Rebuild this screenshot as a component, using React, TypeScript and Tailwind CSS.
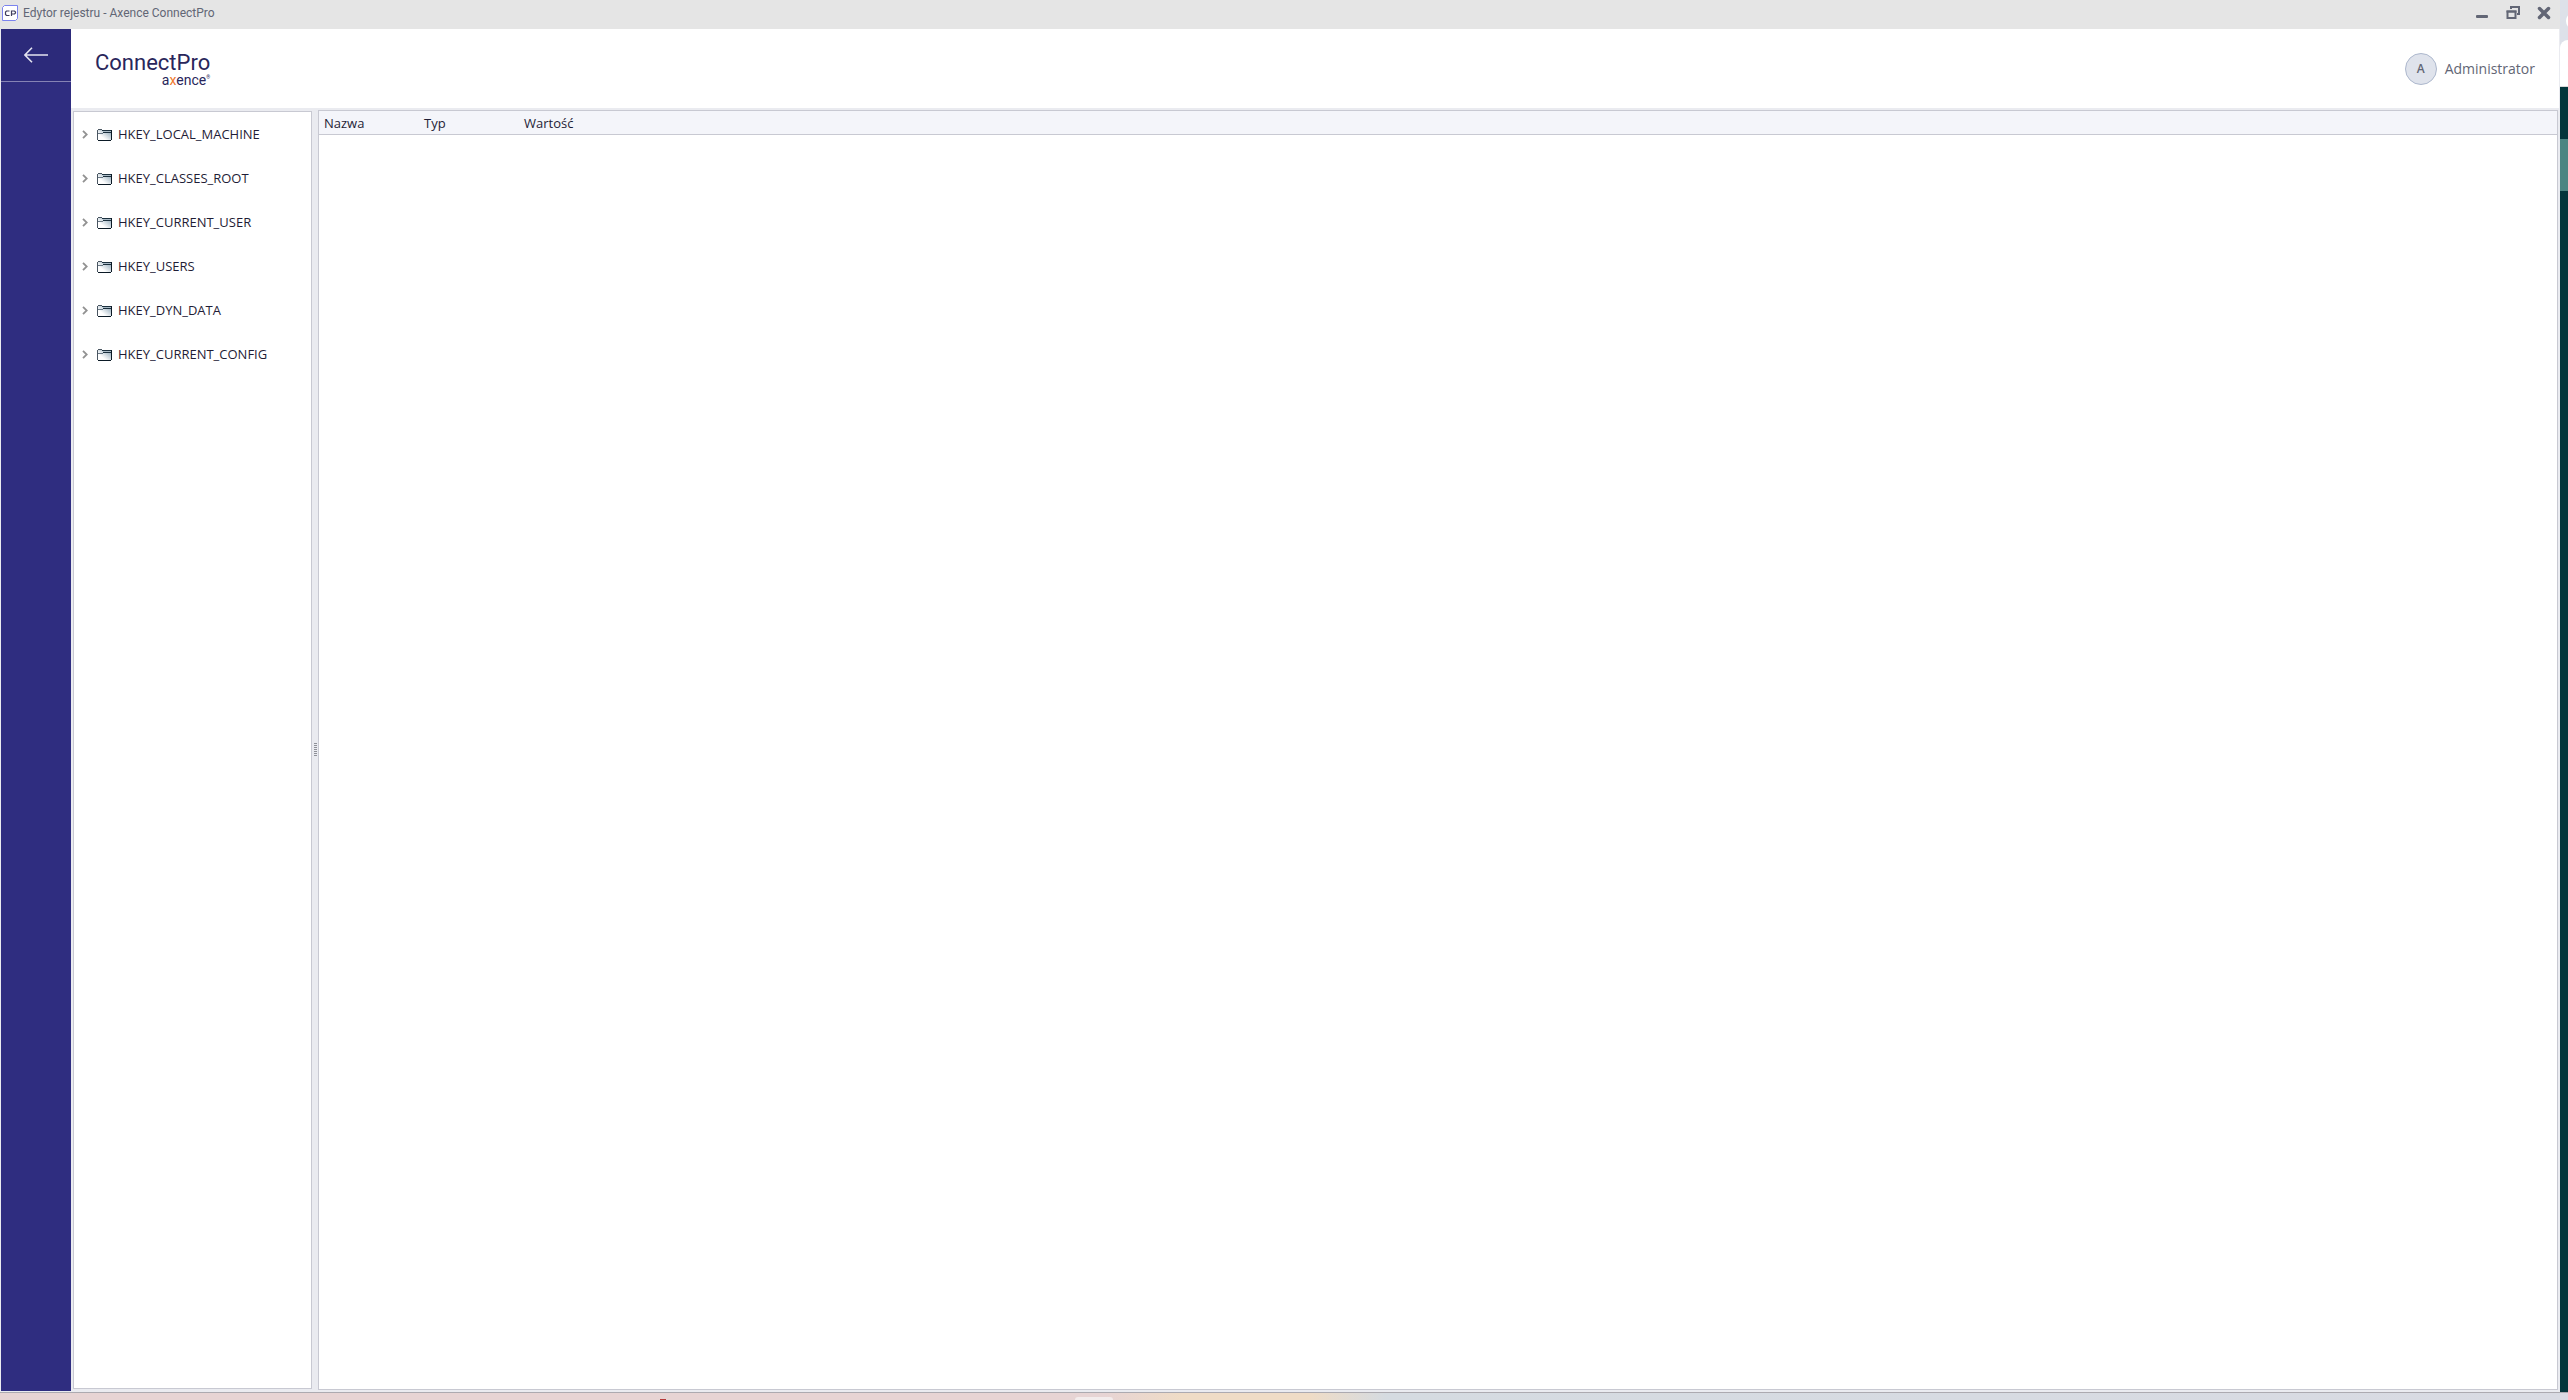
import React from "react";

const rootKeys = [
  "HKEY_LOCAL_MACHINE",
  "HKEY_CLASSES_ROOT",
  "HKEY_CURRENT_USER",
  "HKEY_USERS",
  "HKEY_DYN_DATA",
  "HKEY_CURRENT_CONFIG",
];

function FolderIcon() {
  return (
    <svg width="15" height="12" viewBox="0 0 15 12" shapeRendering="crispEdges" aria-hidden="true">
      <defs>
        <linearGradient id="folderFill" x1="0" y1="1" x2="1" y2="0">
          <stop offset="0.3" stopColor="#ffffff" />
          <stop offset="1" stopColor="#86a0b2" />
        </linearGradient>
      </defs>
      <rect x="1" y="1" width="13" height="10" fill="url(#folderFill)" />
      <path d="M1 0h4v1H1zM0 1h1v10H0z" fill="#4a5662" />
      <path d="M5 1h9v1H5zM6 3h8v1H6z" fill="#1b303e" />
      <path d="M6 2h8v1H6z" fill="#a9bac6" />
      <path d="M1 4h5v1H1z" fill="#6b7a88" />
      <path d="M14 1h1v10h-1zM1 11h13v1H1z" fill="#0b1a26" />
    </svg>
  );
}

function TitleBar() {
  return (
    <div className="flex h-[29px] shrink-0 items-center bg-[#e5e5e5] pb-[3px] pl-0.5 pr-[9px] text-[#626675]">
      <svg width="16" height="16" viewBox="0 0 16 16" aria-hidden="true">
        <path d="M2.500.5h13v13l-2 2h-13v-13z" fill="#fff" stroke="#7b83ee" />
        <path
          d="M7.500 6H4.500L3.500 7v2.500l1 1h3M9.500 11V6h3l1 1v1l-1 1h-3"
          fill="none"
          stroke="#3f3d5c"
          strokeWidth="1.200"
        />
      </svg>
      <h1 className="ml-[5px] font-[Roboto] text-[12px] leading-4">Edytor rejestru - Axence ConnectPro</h1>
      <div className="ml-auto flex items-center gap-[17px]">
        <button type="button" aria-label="Minimize">
          <svg width="14" height="14" viewBox="0 0 14 14">
            <rect x="1" y="9" width="12" height="3" rx="1" fill="#626675" />
          </svg>
        </button>
        <button type="button" aria-label="Restore">
          <svg width="14" height="14" viewBox="0 0 14 14" fill="none" stroke="#626675">
            <path d="M5 3V1h8v7h-2" strokeWidth="2" />
            <path d="M1.500 5.500h8V12h-8z" strokeWidth="2" />
            <path d="M.5 5.500h10" strokeWidth="2" />
          </svg>
        </button>
        <button type="button" aria-label="Close">
          <svg width="14" height="14" viewBox="0 0 14 14">
            <path d="M2.500 2.500l9 9M11.500 2.500l-9 9" stroke="#626675" strokeWidth="3.500" strokeLinecap="round" />
          </svg>
        </button>
      </div>
    </div>
  );
}

function Sidebar() {
  return (
    <nav className="w-[70px] shrink-0 bg-[#2f2d80]">
      <button
        type="button"
        aria-label="Back"
        className="flex h-[53px] w-full items-center justify-center border-b border-[#8583b5] bg-[#2c2a7a]"
      >
        <svg width="24" height="16" viewBox="0 0 24 16" fill="none" stroke="#e4e4f0" strokeWidth="1.600">
          <path d="M8 .8L.9 8 8 15.200M1 8h23" />
        </svg>
      </button>
    </nav>
  );
}

function Logo() {
  return (
    <div className="flex flex-col items-end pt-0.5 font-[Roboto] text-[#29265b]">
      <span className="text-[22px] leading-5">ConnectPro</span>
      <span className="flex text-[14px] leading-[14px]">
        a<span className="text-[#f0772b]">x</span>ence
        <span className="text-[5px] leading-2">®</span>
      </span>
    </div>
  );
}

function Header() {
  return (
    <header className="flex h-[79px] shrink-0 items-center justify-between bg-white px-6">
      <Logo />
      <div className="flex items-center gap-2 text-[14px] text-[#626675]">
        <span className="flex size-8 items-center justify-center rounded-full border border-[#adb8cd] bg-[#dfe3ec] text-[12px] font-semibold">
          A
        </span>
        Administrator
      </div>
    </header>
  );
}

function KeyTree() {
  return (
    <aside className="mb-0.5 mt-[3px] w-[239px] shrink-0 border border-[#c8c9d2] bg-white">
      <ul>
        {rootKeys.map((key) => (
          <li key={key}>
            <button type="button" className="flex h-11 w-full items-center pl-2 pt-px text-[13px] text-[#1f1d36]">
              <svg width="6" height="9" viewBox="0 0 6 9" fill="none" stroke="#929292" strokeWidth="1.800" aria-hidden="true">
                <path d="M1 .8L4.700 4.500 1 8.200" />
              </svg>
              <span className="ml-[9px] mr-1.5 shrink-0">
                <FolderIcon />
              </span>
              {key}
            </button>
          </li>
        ))}
      </ul>
    </aside>
  );
}

function Splitter() {
  return (
    <div role="separator" aria-orientation="vertical" className="flex w-1.5 shrink-0 flex-col items-center justify-center gap-px">
      {Array.from({ length: 7 }, (_, i) => (
        <span key={i} className="h-px w-[3px] bg-[#8e9097]" />
      ))}
    </div>
  );
}

function ValuesPane() {
  return (
    <section className="mb-px mt-0.5 flex-1 border border-[#c8c9d2] bg-white">
      <table className="w-full table-fixed border-separate border-spacing-0 text-left text-[13px] leading-[18px] text-[#1f1d36]">
        <thead>
          <tr className="h-6 bg-[#f4f5fa]">
            <th className="w-[100px] border-b border-[#c8c9d2] px-[5px] py-0 font-normal">Nazwa</th>
            <th className="w-[100px] border-b border-[#c8c9d2] px-[5px] py-0 font-normal">Typ</th>
            <th className="border-b border-[#c8c9d2] px-[5px] py-0 font-normal">Wartość</th>
          </tr>
        </thead>
        <tbody />
      </table>
    </section>
  );
}

export default function App() {
  return (
    <div className="flex h-screen flex-col overflow-hidden font-['Open_Sans',sans-serif]">
      <div className="flex min-h-0 flex-1">
        <div className="flex min-w-0 flex-1 flex-col bg-[#eaebf0]">
          <TitleBar />
          <div className="mb-px flex min-h-0 flex-1 pl-px">
            <Sidebar />
            <div className="flex min-w-0 flex-1 flex-col pr-px">
              <Header />
              <main className="flex min-h-0 flex-1 pl-0.5 pr-px">
                <KeyTree />
                <Splitter />
                <ValuesPane />
              </main>
            </div>
          </div>
        </div>
        <div className="flex w-2 shrink-0 flex-col bg-[#dde1e9]">
          <div className="flex h-10 items-center justify-end overflow-hidden">
            <span className="-mr-4 mt-[2px] size-[18px] shrink-0 rounded-full bg-white" />
          </div>
          <div className="h-[47px] rounded-tl-lg border-b border-[#d8d8d8] bg-white" />
          <div className="h-[52px] bg-[#03363b]" />
          <div className="h-[52px] bg-[#4b8582]" />
          <div className="flex-1 bg-[#03363b]" />
        </div>
      </div>
      <div className="relative h-2 shrink-0 border-t border-[#acaab0] bg-[linear-gradient(to_right,#e7d4d4_43%,#efdcc6_46%,#efdcc6_51%,#d5dbe1_54%,#d9dbe3_100%)]">
        <span className="absolute bottom-0 left-[26%] h-px w-1.5 -translate-x-2 bg-[#b5393b]" />
        <span className="absolute bottom-0 left-[42%] h-[3px] w-[38px] -translate-x-1 rounded-t-sm bg-[#f3ecec]" />
      </div>
    </div>
  );
}
